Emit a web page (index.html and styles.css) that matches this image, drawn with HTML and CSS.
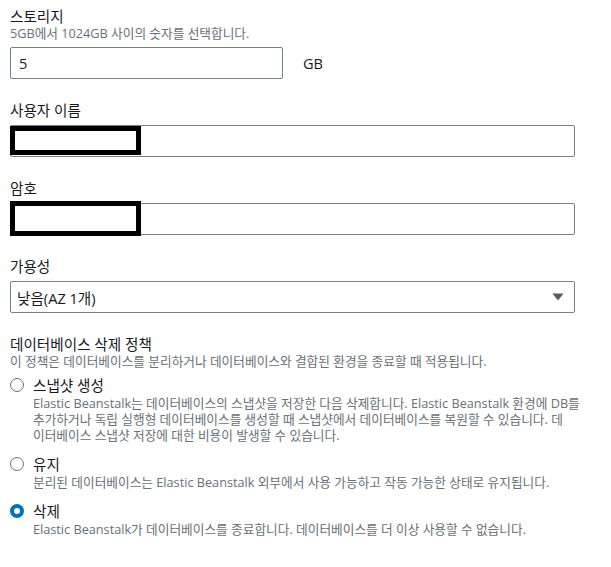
FILE: index.html
```html
<!DOCTYPE html>
<html>
	<head>
		<meta charset="utf-8" />
		<title>데이터베이스 설정</title>
		<link rel="stylesheet" href="styles.css">
	</head>
	<body>
		<div class="form">
			<div class="field first">
				<div class="label">스토리지</div>
				<div class="desc">5GB에서 1024GB 사이의 숫자를 선택합니다.</div>
				<div class="control row">
					<input class="input short" type="text" value="5" />
					<span class="unit">GB</span>
				</div>
			</div>

			<div class="field">
				<div class="label">사용자 이름</div>
				<div class="control masked">
					<input class="input" type="text" value="" />
					<div class="redact user"></div>
				</div>
			</div>

			<div class="field">
				<div class="label">암호</div>
				<div class="control masked">
					<input class="input" type="password" value="" />
					<div class="redact pass"></div>
				</div>
			</div>

			<div class="field">
				<div class="label">가용성</div>
				<div class="control">
					<div class="select">
						<span>낮음(AZ 1개)</span>
						<svg width="12" height="8" viewBox="0 0 12 8"><path d="M0.5 0.5 L11.5 0.5 L6 7.5 Z" fill="#545b64"/></svg>
					</div>
				</div>
			</div>

			<div class="field">
				<div class="label">데이터베이스 삭제 정책</div>
				<div class="desc">이 정책은 데이터베이스를 분리하거나 데이터베이스와 결합된 환경을 종료할 때 적용됩니다.</div>
				<div class="radios">
					<div class="radio">
						<span class="dot"></span>
						<div class="radio-body">
							<div class="radio-label">스냅샷 생성</div>
							<div class="radio-desc">Elastic Beanstalk는 데이터베이스의 스냅샷을 저장한 다음 삭제합니다. Elastic Beanstalk 환경에 DB를<br>추가하거나 독립 실행형 데이터베이스를 생성할 때 스냅샷에서 데이터베이스를 복원할 수 있습니다. 데<br>이터베이스 스냅샷 저장에 대한 비용이 발생할 수 있습니다.</div>
						</div>
					</div>
					<div class="radio">
						<span class="dot"></span>
						<div class="radio-body">
							<div class="radio-label">유지</div>
							<div class="radio-desc">분리된 데이터베이스는 Elastic Beanstalk 외부에서 사용 가능하고 작동 가능한 상태로 유지됩니다.</div>
						</div>
					</div>
					<div class="radio">
						<span class="dot on"></span>
						<div class="radio-body">
							<div class="radio-label">삭제</div>
							<div class="radio-desc">Elastic Beanstalk가 데이터베이스를 종료합니다. 데이터베이스를 더 이상 사용할 수 없습니다.</div>
						</div>
					</div>
				</div>
			</div>
		</div>
	</body>
</html>
```

FILE: styles.css
```css
*{
	margin: 0;
	padding: 0;
	box-sizing: border-box;
}
body{
	background-color: #fff;
	font-family: "Open Sans", "Noto Sans CJK KR", sans-serif;
	color: #16191f;
}
.form{
	width: 575px;
	padding: 7px 0 0 10px;
}
.field{
	margin-top: 22px;
}
.field.first{
	margin-top: 0;
}
.label{
	font-size: 14.6px;
	line-height: 18px;
}
.desc{
	font-size: 12.7px;
	line-height: 16px;
	color: #687078;
	white-space: nowrap;
}
.control{
	margin-top: 6px;
}
.row{
	display: flex;
	align-items: center;
	gap: 20px;
}
.masked{
	position: relative;
}
.input{
	display: block;
	width: 100%;
	height: 32px;
	padding: 0 8px;
	border: 1px solid #75808c;
	border-radius: 2px;
	font-family: inherit;
	font-size: 14.6px;
	color: #16191f;
	outline: none;
}
.input.short{
	width: 273px;
}
.unit{
	font-size: 14.6px;
}
.redact{
	position: absolute;
	left: 0;
	width: 131px;
	border: 5px solid #000;
	background-color: #fff;
}
.redact.user{
	top: 1px;
	height: 29px;
}
.redact.pass{
	top: -2px;
	height: 35px;
}
.select{
	display: flex;
	align-items: center;
	justify-content: space-between;
	height: 32px;
	padding: 0 10px 0 6px;
	border: 1px solid #75808c;
	border-radius: 2px;
	font-size: 14.6px;
}
.radios{
	margin-top: 7px;
}
.radio{
	display: flex;
	gap: 9px;
	margin-top: 12px;
}
.radio:first-child{
	margin-top: 0;
}
.dot{
	flex: none;
	width: 14px;
	height: 14px;
	margin-top: 2px;
	border: 1.5px solid #687078;
	border-radius: 50%;
}
.dot.on{
	border: 4px solid #0073bb;
}
.radio-label{
	font-size: 14.6px;
	line-height: 18px;
}
.radio-desc{
	margin-top: 1px;
	font-size: 12.7px;
	line-height: 16px;
	color: #687078;
	white-space: nowrap;
}
```
